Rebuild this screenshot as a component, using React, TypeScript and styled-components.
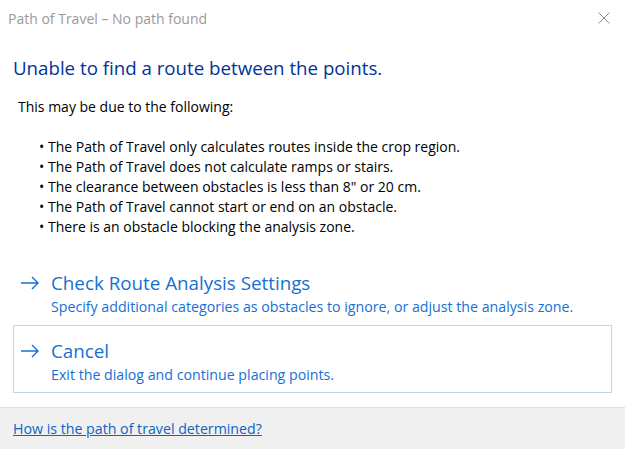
import React from 'react';
import styled, { createGlobalStyle } from 'styled-components';

const GlobalStyle = createGlobalStyle`
  html, body {
    margin: 0;
    padding: 0;
    background: #ffffff;
  }
  body {
    font-family: 'Open Sans', 'Noto Sans', Arial, sans-serif;
  }
`;

const Dialog = styled.div`
  width: 625px;
  height: 449px;
  display: flex;
  flex-direction: column;
  background: #ffffff;
  overflow: hidden;
`;

const TitleBar = styled.div`
  height: 36px;
  display: flex;
  align-items: center;
  justify-content: space-between;
  padding: 0 15px 0 8px;
`;

const TitleText = styled.span`
  font-size: 14px;
  color: #9a9a9a;
`;

const CloseButton = styled.div`
  width: 12px;
  height: 12px;
  display: flex;
`;

const Content = styled.div`
  flex: 1;
  padding: 16px 13px 0 13px;
`;

const Heading = styled.h1`
  margin: 0;
  font-size: 18.7px;
  font-weight: 400;
  color: #003399;
  line-height: 32px;
`;

const Intro = styled.p`
  margin: 13px 0 0 5px;
  font-size: 14px;
  line-height: 20px;
  color: #000000;
`;

const ReasonList = styled.ul`
  margin: 20px 0 0 0;
  padding: 0 0 0 26px;
  list-style: none;
`;

const Reason = styled.li`
  font-size: 14px;
  line-height: 20px;
  color: #000000;
  display: flex;
  gap: 4px;

  &::before {
    content: '•';
    width: 5px;
  }
`;

const CommandList = styled.div`
  margin-top: 20px;
  display: flex;
  flex-direction: column;
`;

const CommandLink = styled.div<{ focused?: boolean }>`
  display: grid;
  grid-template-columns: 20px 1fr;
  column-gap: 11px;
  padding: 11px 0 7px 6px;
  border: 1px solid ${(props) => (props.focused ? '#b7d9f5' : 'transparent')};
  cursor: pointer;
`;

const Arrow = styled.span`
  display: flex;
  align-items: center;
  height: 28px;
  color: #1570d4;
`;

const CommandTitle = styled.div`
  font-size: 18.8px;
  line-height: 28px;
  color: #1570d4;
`;

const CommandNote = styled.div`
  grid-column: 2;
  font-size: 14.2px;
  line-height: 20px;
  color: #1570d4;
`;

const Footer = styled.div`
  height: 41px;
  border-top: 1px solid #dfdfdf;
  background: #f0f0f0;
  display: flex;
  align-items: center;
  padding: 0 13px;
`;

const HelpLink = styled.a`
  font-size: 14.2px;
  color: #0b64c8;
  text-decoration: underline;
  cursor: pointer;
`;

const reasons = [
  'The Path of Travel only calculates routes inside the crop region.',
  'The Path of Travel does not calculate ramps or stairs.',
  'The clearance between obstacles is less than 8" or 20 cm.',
  'The Path of Travel cannot start or end on an obstacle.',
  'There is an obstacle blocking the analysis zone.',
];

const commands = [
  {
    title: 'Check Route Analysis Settings',
    note: 'Specify additional categories as obstacles to ignore, or adjust the analysis zone.',
    focused: false,
  },
  {
    title: 'Cancel',
    note: 'Exit the dialog and continue placing points.',
    focused: true,
  },
];

function ArrowIcon() {
  return (
    <svg width="20" height="14" viewBox="0 0 20 14" fill="none">
      <path d="M1 7h17M12 1l6 6-6 6" stroke="currentColor" strokeWidth="1.4" />
    </svg>
  );
}

export default function App() {
  return (
    <>
      <GlobalStyle />
      <Dialog>
        <TitleBar>
          <TitleText>Path of Travel – No path found</TitleText>
          <CloseButton>
            <svg width="12" height="12" viewBox="0 0 12 12">
              <path d="M0.5 0.5l11 11M11.5 0.5l-11 11" stroke="#8a8a8a" strokeWidth="1" />
            </svg>
          </CloseButton>
        </TitleBar>
        <Content>
          <Heading>Unable to find a route between the points.</Heading>
          <Intro>This may be due to the following:</Intro>
          <ReasonList>
            {reasons.map((reason) => (
              <Reason key={reason}>{reason}</Reason>
            ))}
          </ReasonList>
          <CommandList>
            {commands.map((cmd) => (
              <CommandLink key={cmd.title} focused={cmd.focused}>
                <Arrow>
                  <ArrowIcon />
                </Arrow>
                <CommandTitle>{cmd.title}</CommandTitle>
                <CommandNote>{cmd.note}</CommandNote>
              </CommandLink>
            ))}
          </CommandList>
        </Content>
        <Footer>
          <HelpLink>How is the path of travel determined?</HelpLink>
        </Footer>
      </Dialog>
    </>
  );
}
